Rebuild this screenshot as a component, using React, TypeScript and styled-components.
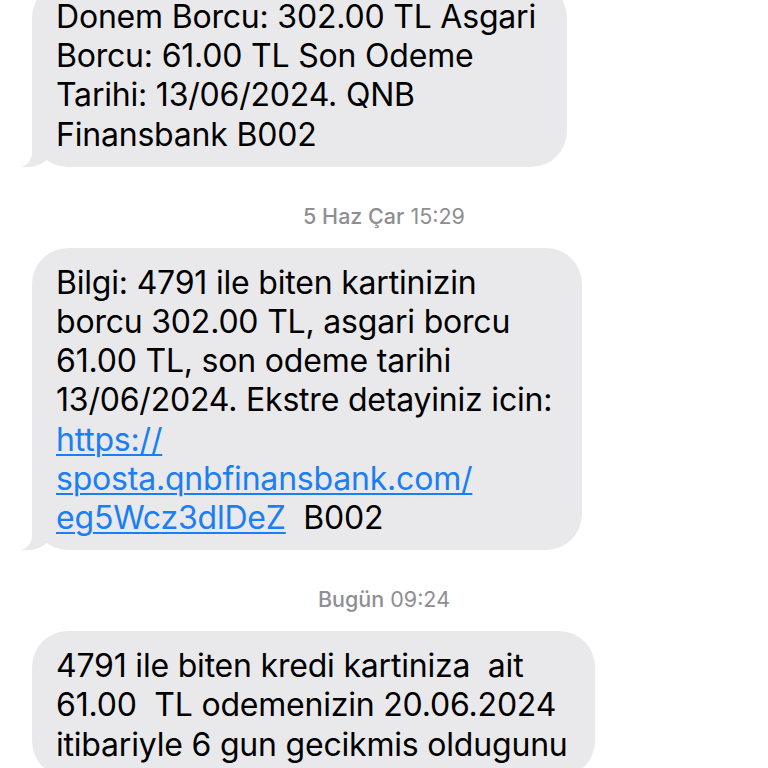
import React from "react"
import styled, { createGlobalStyle } from "styled-components"

const GlobalStyle = createGlobalStyle`
  html, body {
    margin: 0;
    padding: 0;
    background: #ffffff;
  }
  body {
    font-family: "Inter", "Liberation Sans", sans-serif;
    -webkit-font-smoothing: antialiased;
  }
`

type Part = { text: string; link?: boolean }
type Msg = {
  stamp?: { day: string; time: string }
  width: number
  tail: boolean
  lines: Part[][]
}

const messages: Msg[] = [
  {
    width: 535,
    tail: true,
    lines: [
      [{ text: "Donem Borcu: 302.00 TL Asgari" }],
      [{ text: "Borcu: 61.00 TL Son Odeme" }],
      [{ text: "Tarihi: 13/06/2024. QNB" }],
      [{ text: "Finansbank B002" }]
    ]
  },
  {
    stamp: { day: "5 Haz Çar", time: "15:29" },
    width: 550,
    tail: true,
    lines: [
      [{ text: "Bilgi: 4791 ile biten kartinizin" }],
      [{ text: "borcu 302.00 TL, asgari borcu" }],
      [{ text: "61.00 TL, son odeme tarihi" }],
      [{ text: "13/06/2024. Ekstre detayiniz icin:" }],
      [{ text: "https://", link: true }],
      [{ text: "sposta.qnbfinansbank.com/", link: true }],
      [{ text: "eg5Wcz3dlDeZ", link: true }, { text: "  B002" }]
    ]
  },
  {
    stamp: { day: "Bugün", time: "09:24" },
    width: 563,
    tail: false,
    lines: [
      [{ text: "4791 ile biten kredi kartiniza  ait" }],
      [{ text: "61.00  TL odemenizin 20.06.2024" }],
      [{ text: "itibariyle 6 gun gecikmis oldugunu" }]
    ]
  }
]

export default function App() {
  return (
    <>
      <GlobalStyle />
      <Thread>
        {messages.map((m, i) => (
          <React.Fragment key={i}>
            {m.stamp && (
              <Stamp>
                <StampDay>{m.stamp.day}</StampDay> {m.stamp.time}
              </Stamp>
            )}
            <Bubble $width={m.width} $tail={m.tail}>
              {m.lines.map((parts, j) => (
                <Line key={j}>
                  {parts.map((p, k) =>
                    p.link ? (
                      <Link key={k} href="#">
                        {p.text}
                      </Link>
                    ) : (
                      <span key={k}>{p.text}</span>
                    )
                  )}
                </Line>
              ))}
            </Bubble>
          </React.Fragment>
        ))}
      </Thread>
    </>
  )
}

// Styled
const Thread = styled.div`
  display: flex;
  flex-direction: column;
  align-items: flex-start;
  padding: 0 0 0 32px;
  margin-top: -18px;
  height: 786px;
  overflow: hidden;
`

const Stamp = styled.div`
  align-self: stretch;
  margin: 37px 32px 20px 0;
  text-align: center;
  font-size: 21.5px;
  line-height: 24px;
  color: #8e8e93;
  font-weight: 400;
`

const StampDay = styled.span`
  font-weight: 500;
`

const Bubble = styled.div<{ $width: number; $tail: boolean }>`
  position: relative;
  box-sizing: border-box;
  width: ${(p) => p.$width}px;
  padding: 15px 20px 13px 24px;
  background: #e9e9eb;
  border-radius: 36px;
  color: #000;
  font-size: 32px;
  line-height: 39.2px;
  letter-spacing: -0.2px;

  &::before,
  &::after {
    content: "";
    display: ${(p) => (p.$tail ? "block" : "none")};
    position: absolute;
    bottom: 0;
    height: 34px;
  }

  &::before {
    left: -10px;
    width: 30px;
    background: #e9e9eb;
    border-bottom-right-radius: 24px 20px;
  }

  &::after {
    left: -36px;
    width: 36px;
    background: #ffffff;
    border-bottom-right-radius: 14px;
  }
`

const Line = styled.div`
  white-space: pre;
`

const Link = styled.a`
  color: #1a7ef5;
  text-decoration: underline;
  text-decoration-thickness: 1.5px;
  text-underline-offset: 3px;
`
